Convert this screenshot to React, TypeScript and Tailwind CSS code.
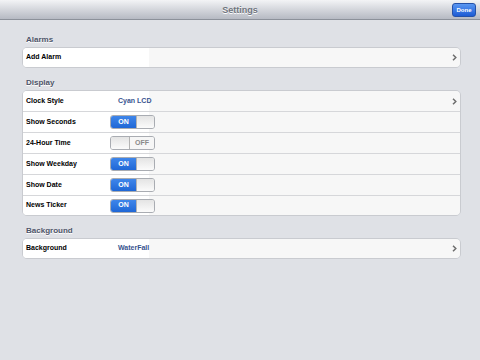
import React from "react";

const font = { fontFamily: '"Liberation Sans", Arial, sans-serif' };

function Chevron() {
  return (
    <svg width="5" height="7" viewBox="0 0 5 7" className="mr-[3px]">
      <path d="M1 0.8 L3.8 3.5 L1 6.2" fill="none" stroke="#6f6f6f" strokeWidth="1.5" />
    </svg>
  );
}

function Switch({ on }: { on: boolean }) {
  return (
    <div className="flex h-[14px] w-[45px] overflow-hidden rounded-[3px] border border-[#a9acb2]">
      {on ? (
        <>
          <div className="flex w-[25px] items-center justify-center bg-gradient-to-b from-[#3f86ea] to-[#1f67d6] text-[7px] font-bold text-white">
            ON
          </div>
          <div className="flex-1 border-l border-[#b3b3b3] bg-gradient-to-b from-[#e4e4e4] to-[#fbfbfb]" />
        </>
      ) : (
        <>
          <div className="w-[19px] border-r border-[#b3b3b3] bg-gradient-to-b from-[#e4e4e4] to-[#fbfbfb]" />
          <div className="flex flex-1 items-center justify-center bg-[#f6f6f6] text-[7px] font-bold text-[#8a8a8a]">
            OFF
          </div>
        </>
      )}
    </div>
  );
}

function Row({
  label,
  value,
  toggle,
  chevron,
  last,
}: {
  label: string;
  value?: string;
  toggle?: boolean;
  chevron?: boolean;
  last?: boolean;
}) {
  return (
    <div className={`flex items-center bg-[#f7f7f7] ${last ? "h-[19px]" : "h-[21px] border-b border-[#d6d7da]"}`}>
      <div className="flex h-full w-[126px] shrink-0 items-center bg-white">
        <span className="w-[95px] shrink-0 whitespace-nowrap pl-[3px] text-[7px] font-bold text-black">{label}</span>
        {value && <span className="whitespace-nowrap text-[7px] font-bold text-[#38548f]">{value}</span>}
        {toggle !== undefined && (
          <div className="-mr-[8px] ml-[-8px]">
            <Switch on={toggle} />
          </div>
        )}
      </div>
      <div className="flex flex-1 justify-end">{chevron && <Chevron />}</div>
    </div>
  );
}

function Header({ title, first }: { title: string; first?: boolean }) {
  return (
    <div
      className={`${first ? "pt-[15px]" : "pt-[10px]"} pb-[2px] pl-[26px] text-[8px] font-bold leading-[10px] text-[#4d5468]`}
      style={{ textShadow: "0 1px 0 #fff" }}
    >
      {title}
    </div>
  );
}

function Card({ children }: { children: React.ReactNode }) {
  return (
    <div className="ml-[22px] mr-[19px] overflow-hidden rounded-[5px] border border-[#c9cbd0]">{children}</div>
  );
}

export default function App() {
  return (
    <div className="h-[360px] w-[480px] bg-[#dfe1e6]" style={font}>
      <div className="relative flex h-[20px] items-center justify-center border-b border-[#8c919a] bg-gradient-to-b from-[#f3f4f6] to-[#b6bac3] pt-[2px]">
        <span className="text-[9px] font-bold text-[#6f747d]" style={{ textShadow: "0 1px 0 #fff" }}>
          Settings
        </span>
        <div className="absolute right-[4px] top-[3px] flex h-[14px] w-[24px] items-center justify-center rounded-[3px] border border-[#2451a8] bg-gradient-to-b from-[#5a97f2] to-[#1c5ad4] text-[6px] font-bold text-white">
          Done
        </div>
      </div>

      <Header title="Alarms" first />
      <Card>
        <Row label="Add Alarm" chevron last />
      </Card>

      <Header title="Display" />
      <Card>
        <Row label="Clock Style" value="Cyan LCD" chevron />
        <Row label="Show Seconds" toggle={true} />
        <Row label="24-Hour Time" toggle={false} />
        <Row label="Show Weekday" toggle={true} />
        <Row label="Show Date" toggle={true} />
        <Row label="News Ticker" toggle={true} last />
      </Card>

      <Header title="Background" />
      <Card>
        <Row label="Background" value="WaterFall" chevron last />
      </Card>
    </div>
  );
}
